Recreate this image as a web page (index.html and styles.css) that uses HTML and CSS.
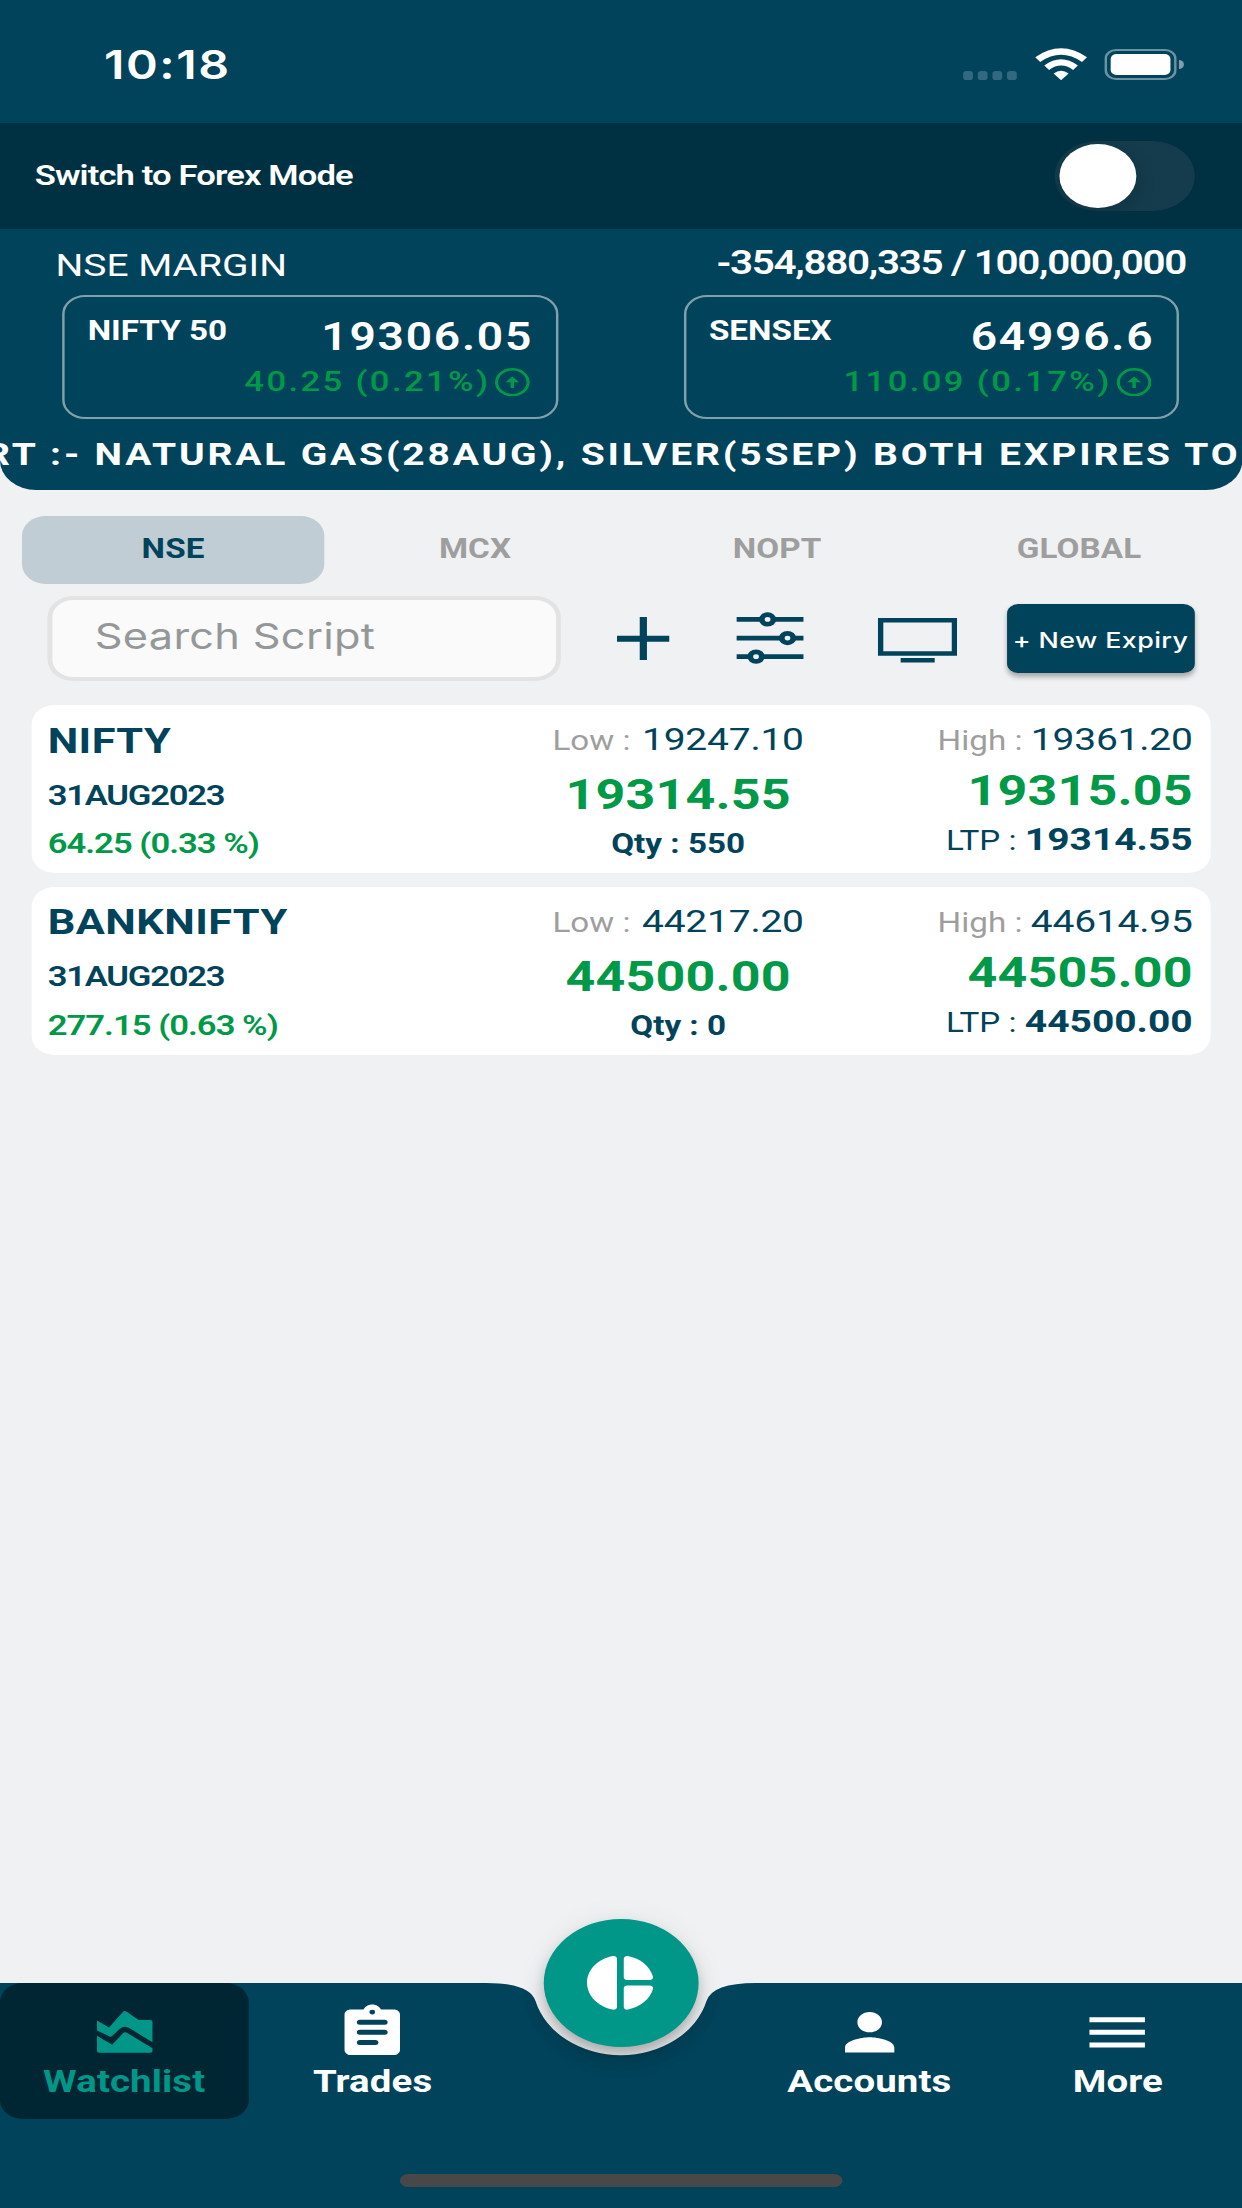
FILE: index.html
```html
<!DOCTYPE html>
<html lang="en">
<head>
<meta charset="utf-8">
<title>Watchlist</title>
<link rel="stylesheet" href="styles.css">
</head>
<body>
<div class="app">
  <header class="header">
    <div class="status">
      <span class="clock">10:18</span>
      <div class="status-icons">
        <div class="cell-dots"><i></i><i></i><i></i><i></i></div>
        <svg class="wifi" viewBox="0 0 18 13.6"><g fill="none" stroke="#fff"><path d="M.9 4.9Q9-1.900 17.1 4.9" stroke-width="2.700"/><path d="M4 8.300Q9 3.900 14 8.300" stroke-width="2.500"/></g><path d="M6.400 10.800Q9 8.500 11.600 10.800L9 13.600z" fill="#fff"/></svg>
        <div class="battery"><div class="battery-body"><div class="battery-level"></div></div><div class="battery-cap"></div></div>
      </div>
    </div>
    <div class="forex">
      <span class="forex-label">Switch to Forex Mode</span>
      <div class="toggle"><div class="knob"></div></div>
    </div>
    <div class="margin-row">
      <span class="margin-label">NSE MARGIN</span>
      <span class="margin-value">-354,880,335 / 100,000,000</span>
    </div>
    <div class="indices">
      <section class="index">
        <div class="index-top"><span class="index-name">NIFTY 50</span><span class="index-value">19306.05</span></div>
        <div class="index-change"><span>40.25 (0.21%)</span><svg class="up" viewBox="2 2 20 20"><circle cx="12" cy="12" r="9.1"/><path d="M11 12v4h2v-4h3l-4-4-4 4z"/></svg></div>
      </section>
      <section class="index">
        <div class="index-top"><span class="index-name">SENSEX</span><span class="index-value">64996.6</span></div>
        <div class="index-change"><span>110.09 (0.17%)</span><svg class="up" viewBox="2 2 20 20"><circle cx="12" cy="12" r="9.1"/><path d="M11 12v4h2v-4h3l-4-4-4 4z"/></svg></div>
      </section>
    </div>
    <div class="ticker">RT :- NATURAL GAS(28AUG), SILVER(5SEP) BOTH EXPIRES TO</div>
  </header>

  <nav class="tabs">
    <span class="tab tab-active">NSE</span>
    <span class="tab">MCX</span>
    <span class="tab">NOPT</span>
    <span class="tab">GLOBAL</span>
  </nav>

  <div class="tools">
    <div class="search">Search Script</div>
    <svg class="tool-plus" viewBox="0 0 18.3 18.3"><path d="M9.150 0v18.300M0 9.150h18.300"/></svg>
    <svg class="tool-sliders" viewBox="0 0 23.5 22"><path d="M0 3.150h23.500M0 11h23.500M0 18.850h23.500"/><circle cx="10.8" cy="3.15" r="2"/><circle cx="17.7" cy="11" r="2"/><circle cx="6.8" cy="18.85" r="2"/></svg>
    <svg class="tool-screen" viewBox="0 0 27.500 18.800"><path d="M.95.950h25.600v14H.95zM7.900 17.800h11.800"/></svg>
    <button class="expiry">+ New Expiry</button>
  </div>

  <main class="list">
    <article class="card">
      <div class="col-left"><b class="symbol">NIFTY</b><span class="expiry-date">31AUG2023</span><span class="change">64.25 (0.33 %)</span></div>
      <div class="col-mid"><div class="range"><span class="muted">Low :</span> <span class="num">19247.10</span></div><b class="price">19314.55</b><b class="qty">Qty : 550</b></div>
      <div class="col-right"><div class="range"><span class="muted">High :</span> <span class="num">19361.20</span></div><b class="price">19315.05</b><div class="ltp">LTP : <b>19314.55</b></div></div>
    </article>
    <article class="card">
      <div class="col-left"><b class="symbol">BANKNIFTY</b><span class="expiry-date">31AUG2023</span><span class="change">277.15 (0.63 %)</span></div>
      <div class="col-mid"><div class="range"><span class="muted">Low :</span> <span class="num">44217.20</span></div><b class="price">44500.00</b><b class="qty">Qty : 0</b></div>
      <div class="col-right"><div class="range"><span class="muted">High :</span> <span class="num">44614.95</span></div><b class="price">44505.00</b><div class="ltp">LTP : <b>44500.00</b></div></div>
    </article>
  </main>

  <footer class="nav">
    <svg class="nav-shape" viewBox="0 0 430 95" preserveAspectRatio="none"><path d="M0 0H168.400Q183.400 0 185.400 7.640A30.600 30.600 0 0 0 244.600 7.640Q246.600 0 261.600 0H430V95H0z"/></svg>
    <div class="nav-items">
      <a class="item item-active"><svg viewBox="0 0 24 24"><path d="M3 7.350 6.900 10.100 11.400 4a.8.8 0 0 1 1.250-.1L16.500 7.100H20.300a.7.7 0 0 1 .7.700V15.900L13.600 10.400Q12 9.100 10.500 10.500L7.500 13.900 3 11.300zM3 13.400 7.900 16.900 11.400 12.350Q12 11.700 12.700 12.200L21 18.300V19.400a.7.7 0 0 1-.7.7H3.700a.7.7 0 0 1-.7-.7z"/></svg><span>Watchlist</span></a>
      <a class="item"><svg viewBox="0 0 24 24"><path fill-rule="evenodd" d="M19 3h-4.180C14.400 1.840 13.300 1 12 1s-2.400.84-2.820 2H5c-1.100 0-2 .9-2 2v14c0 1.100.9 2 2 2h14c1.100 0 2-.9 2-2V5c0-1.100-.9-2-2-2zm-7 .1a.9.9 0 1 1 0 1.800.9.9 0 0 1 0-1.800zM8 7h8a1 1 0 0 1 0 2H8a1 1 0 0 1 0-2zm0 4h8a1 1 0 0 1 0 2H8a1 1 0 0 1 0-2zm0 4h5a1 1 0 0 1 0 2H8a1 1 0 0 1 0-2z"/></svg><span>Trades</span></a>
      <a class="item item-gap"></a>
      <a class="item"><svg viewBox="0 0 24 24"><path d="M12 12c2.210 0 4-1.790 4-4s-1.790-4-4-4-4 1.790-4 4 1.790 4 4 4zm0 2c-2.670 0-8 1.340-8 4v2h16v-2c0-2.660-5.330-4-8-4z"/></svg><span>Accounts</span></a>
      <a class="item"><svg viewBox="0 0 24 24"><path d="M3 18h18v-2H3v2zm0-5h18v-2H3v2zm0-7v2h18V6H3z"/></svg><span>More</span></a>
    </div>
    <div class="home-bar"></div>
    <button class="fab"><svg viewBox="0 0 24 24"><path d="M11 3.180v17.640c0 .64-.59 1.120-1.210.98C5.320 20.800 2 16.790 2 12s3.320-8.800 7.790-9.800c.62-.14 1.210.34 1.210.98zm2.030 0v6.810c0 .55.45 1 1 1h6.790c.64 0 1.120-.59.98-1.220-.85-3.760-3.800-6.720-7.550-7.570-.63-.14-1.220.34-1.220.98zm0 10.830v6.810c0 .64.59 1.120 1.220.98 3.760-.85 6.710-3.820 7.560-7.580.14-.62-.35-1.220-.98-1.220h-6.790c-.56.01-1.010.46-1.010 1.010z"/></svg></button>
  </footer>
</div>
</body>
</html>
```
FILE: styles.css
```css
* { box-sizing: border-box; }
html, body { margin: 0; width: 1242px; height: 2208px; overflow: hidden; }

/* The layout is drawn on a 430 x 932 canvas, zoomed to the window height and widened to fill it. */
.app {
  width: 430px;
  height: 932px;
  display: flex;
  flex-direction: column;
  position: relative;
  overflow: hidden;
  zoom: 2.3691;
  transform: scaleX(1.2192);
  transform-origin: 0 0;
  background: #f0f1f3;
  color: #00435a;
  font-family: Roboto, sans-serif;
  white-space: nowrap;
}
svg { display: block; flex: none; }
button { border: 0; padding: 0; margin: 0; font: inherit; }

.header { height: 206.8px; flex: none; overflow: hidden; background: #00435a; color: #fff; border-radius: 0 0 12.500px 12.500px; }
.status { height: 51.9px; display: flex; justify-content: space-between; padding: 17.400px 20.200px 0 36px; }
.clock { font: 560 16.700px/21px Inter, sans-serif; letter-spacing: .55px; }
.status-icons { display: flex; align-items: flex-end; height: 16.400px; }
.cell-dots { display: flex; gap: 1.750px; margin-right: 6.200px; }
.cell-dots i { width: 3.400px; height: 3.800px; border-radius: 1.200px; background: #336980; }
.wifi { width: 18px; height: 13.600px; margin-right: 6.100px; }
.battery { display: flex; align-items: center; gap: .9px; }
.battery-body { width: 24.800px; height: 13.100px; padding: 1.200px; border: .9px solid #6b93a2; border-radius: 4px; }
.battery-level { height: 100%; border-radius: 2px; background: #fff; }
.battery-cap { width: 1.700px; height: 4.100px; border-radius: 0 2px 2px 0; background: #809fac; }

.forex { height: 44.800px; display: flex; align-items: center; justify-content: space-between; padding: 0 16.200px 0 12px; background: #003142; }
.forex-label { font-size: 12px; font-weight: 600; letter-spacing: -.31px; padding-bottom: .6px; }
.toggle { width: 48.500px; height: 29.700px; padding: 1.350px; border-radius: 15px; background: #143c4c; overflow: hidden; }
.knob { width: 26.900px; height: 27px; border-radius: 50%; background: #fff; box-shadow: 0 3px 8px rgba(0, 0, 0, .15); }

.margin-row { height: 27.800px; display: flex; justify-content: space-between; padding: 4.200px 19.400px 0 19.200px; line-height: 20px; }
.margin-label { font-size: 13.500px; margin-top: 1.100px; }
.margin-value { font-size: 14px; font-weight: 600; letter-spacing: -.46px; }

.indices { display: flex; justify-content: space-between; padding: 0 21.700px; }
.index { width: 171.500px; height: 52.400px; padding: 7px 8px 0; border: 1px solid #80a1ac; border-radius: 8px; }
.index-top { display: flex; justify-content: space-between; line-height: 20px; height: 21px; }
.index-name { font-size: 11.500px; font-weight: 700; margin-top: -2.400px; margin-left: -.2px; }
.index-value { font-size: 16px; font-weight: 600; letter-spacing: .6px; margin-right: -.2px; }
.index-change { display: flex; justify-content: flex-end; align-items: center; line-height: 16px; font-size: 12px; font-weight: 500; letter-spacing: .82px; color: #009947; padding-right: .8px; }
.up { width: 12px; height: 12px; margin-left: 1.800px; fill: currentColor; }
.up circle { fill: none; stroke: currentColor; stroke-width: 1.800; }

.ticker { font-size: 13.500px; font-weight: 700; line-height: 20px; padding-top: 5px; margin-left: -5.200px; letter-spacing: .978px; }

.tabs { flex: none; display: flex; margin: 11px 4.150px 0 7.650px; height: 28.700px; }
.tab { flex: 1; text-align: center; line-height: 28px; font-size: 11.500px; font-weight: 700; letter-spacing: .04px; color: #9e9e9e; border-radius: 8.300px; }
.tab-active { background: #c1cdd4; color: #00435a; }

.tools { flex: none; display: flex; align-items: center; margin-top: 5.100px; padding-left: 16.500px; height: 35.900px; }
.search { width: 177.700px; height: 35.900px; padding: 0 14.600px; border: 1.800px solid #e3e3e3; border-radius: 9px; background: #fafafa; color: #959899; font: 400 15px/31.300px Inter, sans-serif; letter-spacing: .11px; }
.tool-plus, .tool-sliders, .tool-screen { fill: none; stroke: #00435a; }
.tool-plus { width: 18.300px; height: 18.300px; margin-left: 19.300px; stroke-width: 2.500; }
.tool-sliders { width: 23.500px; height: 22px; margin-left: 23px; margin-bottom: .6px; stroke-width: 2; }
.tool-sliders circle { fill: #f0f1f3; }
.tool-screen { width: 27.500px; height: 18.800px; margin-left: 25.700px; margin-top: 1.500px; stroke-width: 1.900; }
.expiry { width: 64.900px; height: 28.900px; margin-left: 17.100px; border-radius: 4px; background: #00435a; color: #fff; font: 500 9.300px/29px Inter, sans-serif; letter-spacing: .14px; padding-top: .8px; box-shadow: 0 1.500px 2px rgba(0, 0, 0, .3); }

.list { flex: none; display: flex; flex-direction: column; gap: 5.900px; margin: 10px 11px 0; }
.card { height: 70.900px; display: grid; grid-template-columns: 150.300px 136px 1fr; padding: 0 6.100px 0 5.500px; border-radius: 8px; background: #fff; }
.card > div { display: flex; flex-direction: column; line-height: 20px; }
.col-left { align-items: flex-start; padding-top: 5.400px; }
.col-mid { align-items: center; padding-top: 4.100px; }
.col-right { align-items: flex-end; padding-top: 4.100px; }
.symbol { font-size: 15px; letter-spacing: .15px; }
.expiry-date { font-size: 12px; font-weight: 600; letter-spacing: -.43px; margin-top: 2.800px; }
.change { font-size: 12px; font-weight: 600; letter-spacing: -.34px; margin-top: .6px; color: #009947; }
.muted { font-size: 11.500px; color: #9e9e9e; }
.num { font-size: 13.500px; letter-spacing: -.08px; }
.price { font-size: 18px; letter-spacing: .06px; color: #009947; }
.col-mid .price { margin-top: 2.200px; }
.qty { font-size: 11.500px; margin-top: 1px; }
.col-right .num { margin-left: -1.100px; }
.col-right .price { margin-top: .6px; }
.ltp { font-size: 11.500px; margin-top: .7px; }
.ltp b { font-size: 13.500px; }

.nav { position: absolute; left: 0; right: 0; bottom: 0; height: 95px; }
.nav-shape { position: absolute; inset: 0; width: 430px; height: 95px; fill: #00435a; }
.nav-items { position: relative; display: flex; height: 57.400px; }
.item { width: 86px; height: 57.400px; display: flex; flex-direction: column; align-items: center; padding-top: 8.100px; border-radius: 8px; color: #fff; font-size: 13.300px; font-weight: 700; line-height: 16px; letter-spacing: .04px; }
.item svg { width: 25.600px; height: 25.600px; fill: currentColor; }
.item-active { background: #002533; color: #009688; }
.home-bar { position: relative; width: 153.400px; height: 5.500px; margin: 23.200px auto 0; border-radius: 2.750px; background: #484848; }
.fab { position: absolute; left: 188.200px; top: -27px; width: 53.600px; height: 54px; display: grid; place-items: center; border-radius: 50%; background: #009688; box-shadow: 0 3px 5px -1px rgba(0, 0, 0, .2), 0 5px 8px rgba(0, 0, 0, .13), 0 1px 12px rgba(0, 0, 0, .06); }
.fab svg { width: 27.700px; height: 27.700px; margin-right: .5px; fill: #fff; }
```
